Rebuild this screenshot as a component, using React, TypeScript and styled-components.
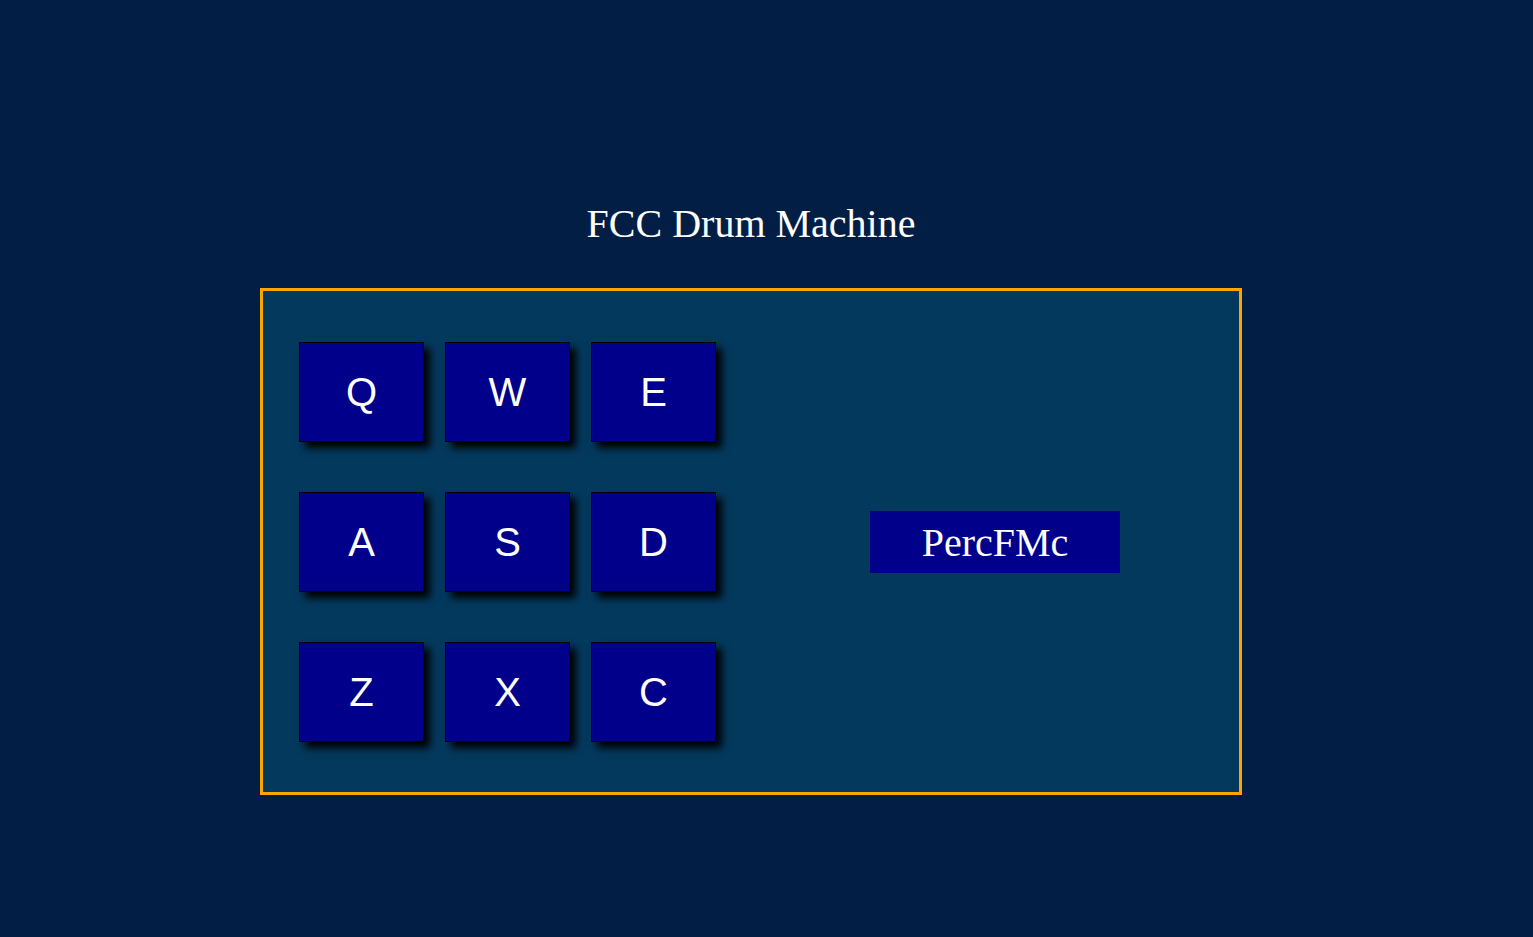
import React from 'react';
import styled, { createGlobalStyle } from 'styled-components';

const GlobalStyle = createGlobalStyle`
	html, body {
		margin: 0;
		padding: 0;
		background-color: #021e45;
	}

	body {
		font-family: 'Liberation Serif', 'Times New Roman', serif;
	}
`;

const Page = styled.div`
	display: flex;
	flex-direction: column;
	align-items: center;
	padding: 201px 31px 165px 0;
	color: #ffffff;
`;

const Title = styled.h1`
	margin: 0 0 41px;
	font-size: 40px;
	font-weight: 400;
	line-height: 46px;
`;

const Machine = styled.div`
	display: flex;
	align-items: center;
	box-sizing: border-box;
	width: 982px;
	padding: 51px 0 50px 36px;
	background-color: #04395e;
	border: 3px solid #ffa500;
`;

const PadGrid = styled.div`
	display: grid;
	grid-template-columns: repeat(3, 125px);
	grid-auto-rows: 100px;
	column-gap: 21px;
	row-gap: 50px;
`;

const Pad = styled.div`
	display: flex;
	align-items: center;
	justify-content: center;
	box-sizing: border-box;
	background-color: #00008b;
	border: 1px solid #000000;
	box-shadow: 6px 6px 8px #000000;
	font-family: 'Liberation Sans', Arial, sans-serif;
	font-size: 40px;
	color: #ffffff;
	cursor: pointer;
`;

const Display = styled.div`
	display: flex;
	align-items: center;
	justify-content: center;
	width: 250px;
	height: 62px;
	margin-left: 154px;
	background-color: #00008b;
	font-size: 40px;
	color: #ffffff;
`;

const keys = ['Q', 'W', 'E', 'A', 'S', 'D', 'Z', 'X', 'C'];

const App = () => {
	return (
		<>
			<GlobalStyle />
			<Page>
				<Title>FCC Drum Machine</Title>
				<Machine id="drum-machine">
					<PadGrid>
						{keys.map((key) => (
							<Pad key={key} className="drum-pad">
								{key}
							</Pad>
						))}
					</PadGrid>
					<Display id="display">PercFMc</Display>
				</Machine>
			</Page>
		</>
	);
};

export default App;
